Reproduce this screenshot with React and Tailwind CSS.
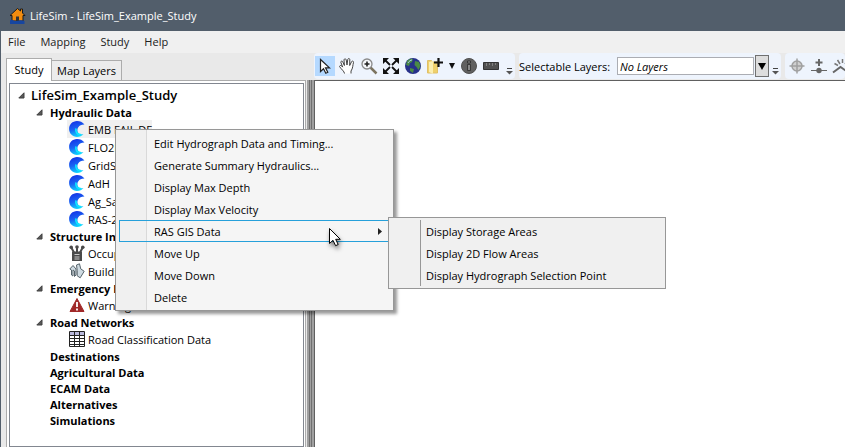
const WAVE = (
  <svg width="16" height="16" viewBox="0 0 16 16" className="shrink-0" aria-hidden="true">
    <defs>
      <linearGradient id="wave" x1="0.3" y1="0" x2="0.6" y2="1">
        <stop offset="0" stopColor="#1433e6" />
        <stop offset="0.5" stopColor="#1a66f4" />
        <stop offset="1" stopColor="#10dcff" />
      </linearGradient>
    </defs>
    <path d="M15.500 3.500C13.500 1.200 11 .1 8 .1 3.500.1.100 3.700.100 8s3.400 7.900 7.900 7.900c2.700 0 4.900-.9 6.500-2.900-2 .8-4.700.3-5.600-1.800C7.500 8 9.500 3.400 15.500 3.500z" fill="url(#wave)" />
    <path d="M12 13.600C8.500 14 6.300 11.500 7 7.500" stroke="#0fe6ff" strokeWidth="1.800" fill="none" />
  </svg>
);

const OCCUPANCY = (
  <svg width="16" height="16" viewBox="0 0 16 16" className="shrink-0" aria-hidden="true">
    <g fill="#4a4a4a">
      <circle cx="2.200" cy="2.200" r="1.800" />
      <circle cx="8" cy="2" r="1.800" />
      <circle cx="13.800" cy="2.200" r="1.800" />
      <path d="M3 6.500h10V16H3z" />
    </g>
    <path d="M2 2l3 5.500M8 2v5M14 2l-3 5.500" stroke="#4a4a4a" strokeWidth="2" />
    <path d="M5.500 9.500h5M5.500 12h5M5.500 14h5" stroke="#c8c8c8" />
  </svg>
);

const BUILDINGS = (
  <svg width="16" height="16" viewBox="0 0 16 16" className="shrink-0" fill="#cfdbe2" stroke="#56636b" aria-hidden="true">
    <path d="M.8 6L4 2.500 7 6v6l-1.500 1.500V8L4 7v6L2.500 12V7z" />
    <path d="M7.500 2l3-1.200 1.200 5 3.500 2.500-4 6.500-3-2V7.500z" />
  </svg>
);

const WARNING = (
  <svg width="16" height="16" viewBox="0 0 16 16" className="shrink-0" aria-hidden="true">
    <path d="M8 1.500L15 14.500H1z" fill="#a02828" stroke="#a02828" strokeLinejoin="round" />
    <path d="M8 5v5M8 11.500v2" stroke="#fff" strokeWidth="1.800" />
  </svg>
);

const TABLE = (
  <svg width="16" height="16" viewBox="0 0 16 16" className="shrink-0" aria-hidden="true">
    <path d="M.5.5h15v15H.5z" fill="#fff" stroke="#222" />
    <path d="M1 1h14v3H1z" fill="#b9b9dc" />
    <path d="M0 4.500h16M0 7.500h16M0 10.500h16M0 13.500h16M5.500 0v16M10.500 0v16" stroke="#222" />
  </svg>
);

const TREE = [
  { label: "Hydraulic Data", open: true, icon: WAVE, items: ["EMB FAIL DF", "FLO2D", "GridSample", "AdH", "Ag_Sample", "RAS-2D"] },
  { label: "Structure Inventories", open: true, items: [["Occupancy Types", OCCUPANCY], ["Buildings", BUILDINGS]] },
  { label: "Emergency Planning", open: true, items: [["Warning", WARNING]] },
  { label: "Road Networks", open: true, items: [["Road Classification Data", TABLE]] },
  { label: "Destinations" },
  { label: "Agricultural Data" },
  { label: "ECAM Data" },
  { label: "Alternatives" },
  { label: "Simulations" },
];

const MENU = [
  "Edit Hydrograph Data and Timing...",
  "Generate Summary Hydraulics...",
  "Display Max Depth",
  "Display Max Velocity",
  "RAS GIS Data",
  "Move Up",
  "Move Down",
  "Delete",
];

const SUBMENU = ["Display Storage Areas", "Display 2D Flow Areas", "Display Hydrograph Selection Point"];

function Expander() {
  return (
    <svg width="7" height="7" viewBox="0 0 7 7" className="shrink-0" aria-hidden="true">
      <path d="M6 .8V6H.8z" fill="#595959" stroke="#404040" />
    </svg>
  );
}

function Overflow() {
  return (
    <button aria-label="Toolbar options" className="flex h-full w-3 items-end justify-center pb-1">
      <svg width="7" height="7" viewBox="0 0 7 7" aria-hidden="true">
        <path d="M1 .5h5" stroke="#444" />
        <path d="M0 3h7L3.500 6.500z" fill="#555" />
      </svg>
    </button>
  );
}

function Tool({ label, active, children }) {
  return (
    <button aria-label={label} className={`flex h-5 w-5 shrink-0 items-center justify-center ${active ? "bg-[#b5d9ff]" : ""}`}>
      {children}
    </button>
  );
}

function TreeItem({ label, icon, selected }) {
  return (
    <li className="flex h-[18px] pl-[57px]">
      <span className={`flex items-center gap-[3px] pl-0.5 ${selected ? "bg-[#f0f0f0]" : ""}`}>
        {icon}
        <span className="mt-0.5">{label}</span>
      </span>
    </li>
  );
}

function StudyTree() {
  return (
    <div className="grow border border-[#828790] bg-white pt-0.5 whitespace-nowrap">
      <div className="flex h-[18px] items-center gap-1.5 pl-2 text-[13px] font-semibold">
        <Expander />
        <span>LifeSim_Example_Study</span>
      </div>
      <ul>
        {TREE.map((group) => (
          <li key={group.label}>
            <div className={`flex h-4 items-center gap-[7px] font-bold ${group.open ? "pl-[26px]" : "pl-10"}`}>
              {group.open && <Expander />}
              <span className="mt-0.5">{group.label}</span>
            </div>
            {group.items && (
              <ul>
                {group.items.map((item, i) =>
                  group.icon ? (
                    <TreeItem key={item} label={item} icon={group.icon} selected={i === 0} />
                  ) : (
                    <TreeItem key={item[0]} label={item[0]} icon={item[1]} />
                  )
                )}
              </ul>
            )}
          </li>
        ))}
      </ul>
    </div>
  );
}

function Toolbars() {
  return (
    <div className="flex h-[27px] gap-1 overflow-hidden pb-px">
      <div className="flex shrink-0 items-center gap-0.5 rounded-sm bg-[#eef4fd] pl-px">
        <Tool label="Select" active>
          <svg width="18" height="18" viewBox="0 0 18 18" aria-hidden="true">
            <path d="M4.500 2.500v12l3-2.800 2.300 4.600 2-1-2.300-4.400h4z" fill="#fff" stroke="#222" strokeWidth="1.200" />
          </svg>
        </Tool>
        <Tool label="Pan">
          <svg width="18" height="18" viewBox="0 0 18 18" aria-hidden="true">
            <path d="M6.500 16.500c0-2-3.500-4.500-5-7 .2-1.500 2-1.300 3.200.6L2.800 5.200c0-1.300 1.500-1.500 2-.3l1.600 3.600L6 2.800c.2-1.300 1.900-1.300 2.200 0L9 8l.8-5.700c.4-1.200 2-1 2 .3L11.700 8.500l1.900-3.900c.8-1 2.200-.3 1.900.7-.8 3-.5 6-2.500 8.700v2.500" fill="#fff" stroke="#444" />
          </svg>
        </Tool>
        <Tool label="Zoom in">
          <svg width="18" height="18" viewBox="0 0 18 18" aria-hidden="true">
            <path d="M10.500 10.500l6 6" stroke="#7c7460" strokeWidth="2.500" />
            <circle cx="7" cy="7" r="5" fill="#f5f7fa" stroke="#8a8a8a" strokeWidth="1.300" />
            <path d="M4.500 7h5M7 4.500v5" stroke="#222" strokeWidth="1.600" />
          </svg>
        </Tool>
        <Tool label="Full extent">
          <svg width="18" height="18" viewBox="0 0 18 18" aria-hidden="true">
            <path d="M3 3l5 5M15 3l-5 5M3 15l5-5M15 15l-5-5" stroke="#111" strokeWidth="1.800" />
            <path d="M1 1h6L1 7zM17 1h-6l6 6zM1 17h6l-6-6zM17 17h-6l6-6z" fill="#111" />
          </svg>
        </Tool>
        <Tool label="Globe">
          <svg width="18" height="18" viewBox="0 0 18 18" aria-hidden="true">
            <circle cx="9" cy="9" r="8" fill="#27318a" />
            <path d="M3 4c2-2.500 5-2.500 6-2l-1 3-2 1-1 3-3-1zM11 4l4 1 1.500 4-2 4-2-3-2-2zM6 11l4 1-1 4-3-2z" fill="#4a8a45" />
            <path d="M4 6c1-2 3-3 4-3" stroke="#a8c8e8" fill="none" />
          </svg>
        </Tool>
        <Tool label="Add layer">
          <svg width="18" height="18" viewBox="0 0 18 18" aria-hidden="true">
            <path d="M1.500 3.500h4l1 1.500h5v11h-10z" fill="#efd06a" stroke="#e0c068" />
            <path d="M3 5l4-1v13l-4-2z" fill="#fbeeb0" />
            <path d="M12.500 1v9M8 5.500h9" stroke="#111" strokeWidth="2.200" />
          </svg>
        </Tool>
        <button aria-label="Add layer options" className="flex h-5 w-2.5 items-center justify-center">
          <svg width="6" height="6" viewBox="0 0 6 6" aria-hidden="true"><path d="M0 0h6L3 6z" fill="#111" /></svg>
        </button>
        <Tool label="Identify">
          <svg width="18" height="18" viewBox="0 0 18 18" aria-hidden="true">
            <circle cx="9" cy="9" r="7.500" fill="#606060" stroke="#505050" />
            <path d="M7.500 7.500h3v6h-3zM7.500 4h3v2h-3z" fill="#888" stroke="#2a2a2a" strokeWidth=".8" />
          </svg>
        </Tool>
        <Tool label="Measure">
          <svg width="18" height="18" viewBox="0 0 18 18" aria-hidden="true">
            <path d="M1.500 5.500h15v7h-15z" fill="#505050" stroke="#333" />
            <path d="M4.500 6v3M7.500 6v2M10.500 6v3M13.500 6v2" stroke="#808080" />
          </svg>
        </Tool>
        <Overflow />
      </div>
      <div className="flex shrink-0 items-center rounded-sm bg-[#eef4fd]">
        <label htmlFor="layers" className="mt-0.5 w-[98px] whitespace-nowrap">Selectable Layers:</label>
        <input id="layers" defaultValue="No Layers" className="h-[18px] w-[137px] border border-[#abadb3] bg-white px-0.5 italic" />
        <button aria-label="Show layers" className="ml-px flex h-[22px] w-3.5 items-center justify-center border border-[#707070] bg-[#dddddd]">
          <svg width="8" height="7" viewBox="0 0 8 7" aria-hidden="true"><path d="M0 0h8L4 7z" fill="#000" /></svg>
        </button>
        <Overflow />
      </div>
      <div className="flex min-w-0 grow items-center gap-0.5 rounded-sm bg-[#eef4fd] pl-0.5">
        <Tool label="Add point">
          <svg width="18" height="18" viewBox="0 0 18 18" aria-hidden="true">
            <circle cx="9" cy="9" r="5" fill="#cfcfcf" stroke="#a0a0a0" strokeWidth="1.500" />
            <path d="M9 1.500v15M1.500 9h15" stroke="#a0a0a0" strokeWidth="1.500" />
          </svg>
        </Tool>
        <Tool label="Add vertex">
          <svg width="18" height="18" viewBox="0 0 18 18" aria-hidden="true">
            <path d="M9 2v7M5.500 5.500h7" stroke="#666" strokeWidth="2" />
            <path d="M1 13.500h16" stroke="#666" />
            <circle cx="9" cy="13.500" r="2.700" fill="#666" />
          </svg>
        </Tool>
        <Tool label="Split">
          <svg width="18" height="18" viewBox="0 0 18 18" aria-hidden="true">
            <path d="M1 15.500l7.500-5.500 8 5.500" stroke="#666" strokeWidth="2" fill="none" />
            <path d="M8 7L5.500 3M10.500 6V2M13 7l3-4M6 8.500L2.500 6.500" stroke="#777" strokeWidth="1.500" />
          </svg>
        </Tool>
      </div>
    </div>
  );
}

function ContextMenu() {
  return (
    <div role="menu" className="absolute top-[129px] left-[114px] w-[279px] border border-[#979797] bg-[linear-gradient(to_right,#f0f0f0_30px,#d9d9d9_30px,#d9d9d9_31px,#f5f5f5_31px)] py-0.5 pl-[3px] shadow-[3px_3px_3px_rgba(0,0,0,0.4)]">
      {MENU.map((label) => (
        <button
          key={label}
          role="menuitem"
          className={`flex h-[22px] w-full items-center justify-between border pr-2.5 pl-[34px] text-left whitespace-nowrap ${label === "RAS GIS Data" ? "border-[#26a0da]" : "border-transparent"}`}
        >
          <span className="mt-0.5">{label}</span>
          {label === "RAS GIS Data" && (
            <svg width="4" height="7" viewBox="0 0 4 7" aria-hidden="true"><path d="M0 0l4 3.500L0 7z" fill="#212121" /></svg>
          )}
        </button>
      ))}
      <div role="menu" className="absolute top-[87px] left-[272px] w-[278px] border border-[#979797] bg-[#f0f0f0] py-0.5 pl-[31px]">
        <div className="border-l border-[#979797]">
          {SUBMENU.map((label) => (
            <button key={label} role="menuitem" className="flex h-[22px] w-full items-center pl-[5px] text-left whitespace-nowrap">
              <span className="mt-0.5">{label}</span>
            </button>
          ))}
        </div>
      </div>
      <svg width="20" height="26" viewBox="0 0 20 26" className="absolute top-[97px] left-[212px] drop-shadow-[1px_3px_2px_rgba(0,0,0,0.5)]" aria-hidden="true">
        <path d="M1.500 1.500v15l3.500-3.200 2.600 5.400 2.600-1.200-2.500-5.200h4.600z" fill="#fff" stroke="#000" />
      </svg>
    </div>
  );
}

export default function App() {
  return (
    <div className="relative flex h-screen flex-col overflow-hidden border-l border-[#525e6b] bg-[#e9e9e9] font-['Open_Sans','Noto_Sans',sans-serif] text-[11px] leading-4 text-black">
      <header className="flex h-[31px] shrink-0 items-center gap-1 bg-[#525e6b] pl-2 text-white">
        <svg width="17" height="18" viewBox="0 0 17 18" aria-hidden="true">
          <path d="M8.500 1.500L1 8.500h2V14h11V8.500h2L13.500 6V2h-2v2z" fill="#f28c0f" stroke="#1b1b1b" />
          <path d="M7 9.500h3V14H7z" fill="#333" />
          <path d="M1 13.500c2-2 4 1 7 .5s4-1.500 7.500 0V17H1z" fill="#1746a0" />
        </svg>
        <h1>LifeSim - LifeSim_Example_Study</h1>
      </header>
      <nav className="flex h-[22px] shrink-0 items-center gap-[15px] bg-[#f0f0f0] pl-[7px] text-[#212121]">
        <button>File</button>
        <button>Mapping</button>
        <button>Study</button>
        <button>Help</button>
      </nav>
      <main className="flex min-h-0 grow">
        <aside className="flex w-[305px] shrink-0 flex-col pt-[5px] pl-[5px]">
          <div role="tablist" className="flex h-[22px] items-end">
            <button role="tab" aria-selected="true" className="z-10 -mb-px h-[23px] w-[46px] border border-b-0 border-[#acacac] bg-white">Study</button>
            <button role="tab" aria-selected="false" className="h-5 w-[70px] border border-b-0 border-l-0 border-[#acacac] bg-[#ececec]">Map Layers</button>
          </div>
          <div className="flex grow flex-col border border-b-0 border-[#acacac] bg-white pt-0.5 pr-px pl-0.5">
            <StudyTree />
          </div>
        </aside>
        <section className="flex min-w-0 grow flex-col pl-2">
          <Toolbars />
          <div className="-ml-2 flex grow">
            <div className="ml-px w-[7px] bg-[linear-gradient(to_right,#a0a0a0_2px,#707070_2px,#707070_3px,#a0a0a0_3px,#a0a0a0_4px,#707070_4px,#707070_5px,#a0a0a0_5px)]" />
            <div className="grow border-t border-l border-[#606060] bg-white" />
          </div>
        </section>
      </main>
      <ContextMenu />
    </div>
  );
}
